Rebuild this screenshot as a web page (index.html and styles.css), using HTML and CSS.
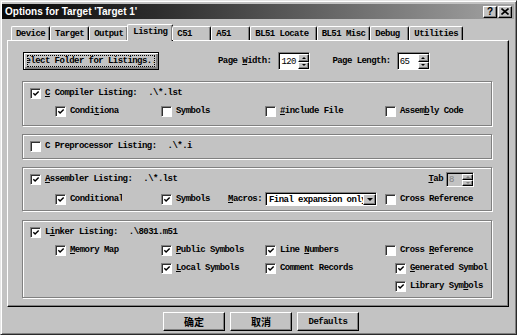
FILE: index.html
```html
<!DOCTYPE html>
<html lang="en">
<head>
    <meta charset="UTF-8">
    <title>Options for Target 'Target 1'</title>
    <link rel="stylesheet" href="styles.css">
</head>
<body>
    <div class="window">
        <div class="titlebar">
            <span class="title">Options for Target 'Target 1'</span>
            <span class="tb-btns">
                <span class="tb-btn">?</span>
                <span class="tb-btn"><svg width="8" height="7" viewBox="0 0 8 7"><path d="M0.5 0.5 7.5 6.5 M7.5 0.5 0.5 6.5" stroke="#000" stroke-width="1.6"/></svg></span>
            </span>
        </div>

        <div class="tabs">
            <div class="tab">Device</div>
            <div class="tab">Target</div>
            <div class="tab">Output</div>
            <div class="tab active">Listing</div>
            <div class="tab">C51</div>
            <div class="tab">A51</div>
            <div class="tab wide">BL51 Locate</div>
            <div class="tab">BL51 Misc</div>
            <div class="tab">Debug</div>
            <div class="tab">Utilities</div>
        </div>

        <div class="panel">
            <div class="top-row">
                <div class="btn btn-folder"><span class="focus"><span><u>S</u>elect Folder for Listings...</span></span></div>
                <span class="lbl lbl-width">Page <u>W</u>idth:</span>
                <div class="spin spin-width">
                    <span class="spin-val">120</span>
                    <span class="spin-btns"><span class="sb up"></span><span class="sb down"></span></span>
                </div>
                <span class="lbl lbl-length">Pa<u>g</u>e Length:</span>
                <div class="spin spin-length">
                    <span class="spin-val">65</span>
                    <span class="spin-btns"><span class="sb up"></span><span class="sb down"></span></span>
                </div>
            </div>

            <div class="group g-compiler">
                <div class="row">
                    <span class="cb"><svg width="9" height="9" viewBox="0 0 9 9"><path d="M1.5 4.2 3.5 6.2 7.5 2.2" fill="none" stroke="#000" stroke-width="1.6"/></svg></span>
                    <span class="txt"><u>C</u> Compiler Listing:</span>
                    <span class="path">.\*.lst</span>
                </div>
                <div class="row opts">
                    <div class="opt"><span class="cb"><svg width="9" height="9" viewBox="0 0 9 9"><path d="M1.5 4.2 3.5 6.2 7.5 2.2" fill="none" stroke="#000" stroke-width="1.6"/></svg></span><span class="clip">Condi<u>t</u>ionals</span></div>
                    <div class="opt"><span class="cb"></span>Symbols</div>
                    <div class="opt"><span class="cb"></span><span><u>#</u>include File</span></div>
                    <div class="opt"><span class="cb"></span><span>Assem<u>b</u>ly Code</span></div>
                </div>
            </div>

            <div class="group g-preproc">
                <div class="row">
                    <span class="cb"></span>
                    <span class="txt">C Preprocessor Listing:</span>
                    <span class="path">.\*.i</span>
                </div>
            </div>

            <div class="group g-asm">
                <div class="row">
                    <span class="cb"><svg width="9" height="9" viewBox="0 0 9 9"><path d="M1.5 4.2 3.5 6.2 7.5 2.2" fill="none" stroke="#000" stroke-width="1.6"/></svg></span>
                    <span class="txt"><u>A</u>ssembler Listing:</span>
                    <span class="path">.\*.lst</span>
                    <div class="tab-size">
                        <span><u>T</u>ab</span>
                        <div class="spin spin-tab disabled">
                            <span class="spin-val">8</span>
                            <span class="spin-btns"><span class="sb up"></span><span class="sb down"></span></span>
                        </div>
                    </div>
                </div>
                <div class="row opts opts-asm">
                    <div class="opt"><span class="cb"><svg width="9" height="9" viewBox="0 0 9 9"><path d="M1.5 4.2 3.5 6.2 7.5 2.2" fill="none" stroke="#000" stroke-width="1.6"/></svg></span><span class="clip clip-wide">Conditionals</span></div>
                    <div class="opt-pair">
                        <div class="opt"><span class="cb"><svg width="9" height="9" viewBox="0 0 9 9"><path d="M1.5 4.2 3.5 6.2 7.5 2.2" fill="none" stroke="#000" stroke-width="1.6"/></svg></span>Symbols</div>
                        <span><u>M</u>acros:</span>
                    </div>
                    <div class="combo">
                        <span class="combo-val">Final expansion only</span>
                        <span class="combo-btn"></span>
                    </div>
                    <div class="opt"><span class="cb"></span>Cross Reference</div>
                </div>
            </div>

            <div class="group g-linker">
                <div class="row">
                    <span class="cb"><svg width="9" height="9" viewBox="0 0 9 9"><path d="M1.5 4.2 3.5 6.2 7.5 2.2" fill="none" stroke="#000" stroke-width="1.6"/></svg></span>
                    <span class="txt">L<u>i</u>nker Listing:</span>
                    <span class="path">.\8031.m51</span>
                </div>
                <div class="row opts">
                    <div class="opt"><span class="cb"><svg width="9" height="9" viewBox="0 0 9 9"><path d="M1.5 4.2 3.5 6.2 7.5 2.2" fill="none" stroke="#000" stroke-width="1.6"/></svg></span><span><u>M</u>emory Map</span></div>
                    <div class="opt"><span class="cb"><svg width="9" height="9" viewBox="0 0 9 9"><path d="M1.5 4.2 3.5 6.2 7.5 2.2" fill="none" stroke="#000" stroke-width="1.6"/></svg></span><span><u>P</u>ublic Symbols</span></div>
                    <div class="opt"><span class="cb"><svg width="9" height="9" viewBox="0 0 9 9"><path d="M1.5 4.2 3.5 6.2 7.5 2.2" fill="none" stroke="#000" stroke-width="1.6"/></svg></span><span>Line <u>N</u>umbers</span></div>
                    <div class="opt"><span class="cb"></span><span>Cross <u>R</u>eference</span></div>
                </div>
                <div class="row opts">
                    <div></div>
                    <div class="opt"><span class="cb"><svg width="9" height="9" viewBox="0 0 9 9"><path d="M1.5 4.2 3.5 6.2 7.5 2.2" fill="none" stroke="#000" stroke-width="1.6"/></svg></span><span><u>L</u>ocal Symbols</span></div>
                    <div class="opt"><span class="cb"><svg width="9" height="9" viewBox="0 0 9 9"><path d="M1.5 4.2 3.5 6.2 7.5 2.2" fill="none" stroke="#000" stroke-width="1.6"/></svg></span>Comment Records</div>
                    <div class="opt shift"><span class="cb"><svg width="9" height="9" viewBox="0 0 9 9"><path d="M1.5 4.2 3.5 6.2 7.5 2.2" fill="none" stroke="#000" stroke-width="1.6"/></svg></span><span><u>G</u>enerated Symbol</span></div>
                </div>
                <div class="row opts">
                    <div></div>
                    <div></div>
                    <div></div>
                    <div class="opt shift"><span class="cb"><svg width="9" height="9" viewBox="0 0 9 9"><path d="M1.5 4.2 3.5 6.2 7.5 2.2" fill="none" stroke="#000" stroke-width="1.6"/></svg></span><span>Library Sym<u>b</u>ols</span></div>
                </div>
            </div>
        </div>

        <div class="actions">
            <div class="btn btn-action cjk">确定</div>
            <div class="btn btn-action cjk">取消</div>
            <div class="btn btn-action">Defaults</div>
        </div>
    </div>
</body>
</html>
```

FILE: styles.css
```css
* {
    box-sizing: border-box;
}

body {
    margin: 0;
    background: #c3c3c3;
    color: #000;
    font-family: "Liberation Mono", "DejaVu Sans Mono", monospace;
    font-size: 9px;
    font-weight: bold;
    letter-spacing: -0.55px;
}

.window {
    width: 517px;
    height: 335px;
    border: 1px solid;
    border-color: #e6e6e6 #2a2a2a #2a2a2a #e6e6e6;
    box-shadow: inset 1px 1px #fff, inset -1px -1px #808080;
    padding: 3px 2px 0 1px;
    overflow: hidden;
}

/* title bar */
.titlebar {
    height: 15px;
    display: flex;
    align-items: center;
    justify-content: space-between;
    background: linear-gradient(to right, #080808, #2c2c2c 30%, #a4a4a4);
    padding: 0 2px 0 3px;
}

.title {
    font-family: "Liberation Sans", Arial, sans-serif;
    font-size: 10px;
    letter-spacing: 0;
    color: #fff;
}

.tb-btns {
    display: flex;
    gap: 1px;
}

.tb-btn {
    width: 14px;
    height: 12px;
    display: flex;
    align-items: center;
    justify-content: center;
    background: #c3c3c3;
    border: 1px solid;
    border-color: #fff #000 #000 #fff;
    box-shadow: inset -1px -1px #808080;
    font-family: "Liberation Sans", Arial, sans-serif;
    font-size: 10px;
    letter-spacing: 0;
    line-height: 1;
}

/* tabs */
.tabs {
    display: flex;
    align-items: flex-end;
    height: 16px;
    margin: 5px 0 0 9px;
    position: relative;
    z-index: 1;
}

.tab {
    height: 14px;
    min-width: 39px;
    padding: 0 4px;
    display: flex;
    align-items: center;
    white-space: nowrap;
    border: 1px solid;
    border-bottom: none;
    border-color: #fff #000 #000 #fff;
    box-shadow: inset -1px 0 #808080;
    border-radius: 2px 2px 0 0;
}

.tab.wide {
    padding-right: 7px;
}

.tab.active {
    height: 17px;
    margin: 0 -1px -1px -1px;
    padding: 0 5px 2px 5px;
    background: #c3c3c3;
}

/* tab page */
.panel {
    width: 502px;
    height: 267px;
    margin-left: 5px;
    border: 1px solid;
    border-color: #fff #000 #000 #fff;
    box-shadow: inset -1px -1px #808080;
    padding: 11px 0 0 14px;
}

.top-row {
    display: flex;
    align-items: center;
    height: 18px;
}

.btn {
    display: flex;
    align-items: center;
    justify-content: center;
    border: 1px solid;
    border-color: #fff #000 #000 #fff;
    box-shadow: inset -1px -1px #808080;
    background: #c3c3c3;
    white-space: nowrap;
    overflow: hidden;
}

.btn-folder {
    width: 136px;
    height: 18px;
    margin-left: 1px;
    border: 1px solid #000;
    box-shadow: inset 1px 1px #fff, inset -2px -2px #808080;
}

.btn-folder .focus {
    flex: 1;
    height: 12px;
    margin: 0 3px;
    border: 1px dotted #000;
    display: flex;
    align-items: center;
    justify-content: center;
    overflow: hidden;
}

.btn-folder .focus span {
    flex-shrink: 0;
}

.lbl-width {
    margin-left: 59px;
}

.lbl-length {
    margin-left: 22px;
}

/* spinners */
.spin {
    display: flex;
    height: 18px;
    border: 1px solid;
    border-color: #808080 #fff #fff #808080;
    box-shadow: inset 1px 1px #000;
    background: #fff;
    padding: 1px 0 0 1px;
}

.spin-width {
    width: 32px;
    margin-left: 7px;
}

.spin-length {
    width: 33px;
    margin-left: 6px;
}

.spin-val {
    flex: 1;
    display: flex;
    align-items: center;
    padding-left: 1px;
    font-weight: normal;
}

.spin-btns {
    width: 11px;
    display: flex;
    flex-direction: column;
}

.sb {
    flex: 1;
    background: #c3c3c3;
    border: 1px solid;
    border-color: #fff #000 #000 #fff;
    box-shadow: inset -1px -1px #808080;
    display: flex;
    align-items: center;
    justify-content: center;
}

.sb::after {
    content: "";
    border-left: 2px solid transparent;
    border-right: 2px solid transparent;
}

.sb.up::after {
    border-bottom: 2px solid #000;
}

.sb.down::after {
    border-top: 2px solid #000;
}

.spin-tab {
    width: 28px;
    height: 15px;
    background: #c3c3c3;
}

.spin-tab .spin-val {
    color: #808080;
}

.spin-tab .sb::after {
    border-bottom-color: #808080;
    border-top-color: #808080;
}

/* group boxes */
.group {
    width: 470px;
    border: 1px solid #808080;
    box-shadow: inset 1px 1px #fff, 1px 1px #fff;
    padding: 2px 0 0 7px;
}

.g-compiler {
    height: 45px;
    margin-top: 11px;
}

.g-preproc {
    height: 25px;
    margin-top: 8px;
}

.g-asm {
    height: 44px;
    margin-top: 8px;
}

.g-linker {
    height: 78px;
    margin-top: 9px;
}

.g-asm .opts {
    margin-top: 2px;
}

.row {
    display: flex;
    align-items: center;
    height: 18px;
    white-space: nowrap;
}

.cb {
    width: 11px;
    height: 11px;
    flex-shrink: 0;
    background: #fff;
    border: 1px solid;
    border-color: #808080 #fff #fff #808080;
    box-shadow: inset 1px 1px #303030;
    display: flex;
    align-items: center;
    justify-content: center;
    padding: 1px 0 0 1px;
}

.txt {
    margin-left: 4px;
}

.path {
    margin-left: 11px;
}

.opts {
    display: grid;
    grid-template-columns: 106px 104px 120px auto;
    padding-left: 25px;
}

.opt {
    display: flex;
    align-items: center;
    gap: 4px;
    white-space: nowrap;
}

.opt.shift {
    margin-left: 10px;
}

.clip {
    width: 49px;
    overflow: hidden;
}

.clip-wide {
    width: 52px;
}

.opt-pair {
    display: flex;
    align-items: center;
    justify-content: space-between;
    padding-right: 3px;
}

.tab-size {
    margin-left: auto;
    margin-right: 17px;
    display: flex;
    align-items: center;
    gap: 3px;
}

/* combo box */
.combo {
    width: 112px;
    height: 14px;
    display: flex;
    background: #fff;
    border: 1px solid;
    border-color: #808080 #fff #fff #808080;
    box-shadow: inset 1px 1px #000;
    padding: 1px 0 0 1px;
}

.combo-val {
    flex: 1;
    overflow: hidden;
    padding-left: 2px;
    display: flex;
    align-items: center;
}

.combo-btn {
    width: 13px;
    flex-shrink: 0;
    background: #c3c3c3;
    border: 1px solid;
    border-color: #fff #000 #000 #fff;
    box-shadow: inset -1px -1px #808080;
    display: flex;
    align-items: center;
    justify-content: center;
}

.combo-btn::after {
    content: "";
    border-left: 3px solid transparent;
    border-right: 3px solid transparent;
    border-top: 3px solid #000;
}

/* bottom buttons */
.actions {
    display: flex;
    gap: 5px;
    margin: 5px 0 0 161px;
}

.btn-action {
    width: 62px;
    height: 19px;
}

.cjk {
    font-family: "Noto Sans CJK SC", sans-serif;
    font-size: 10px;
    letter-spacing: 0;
}
```
